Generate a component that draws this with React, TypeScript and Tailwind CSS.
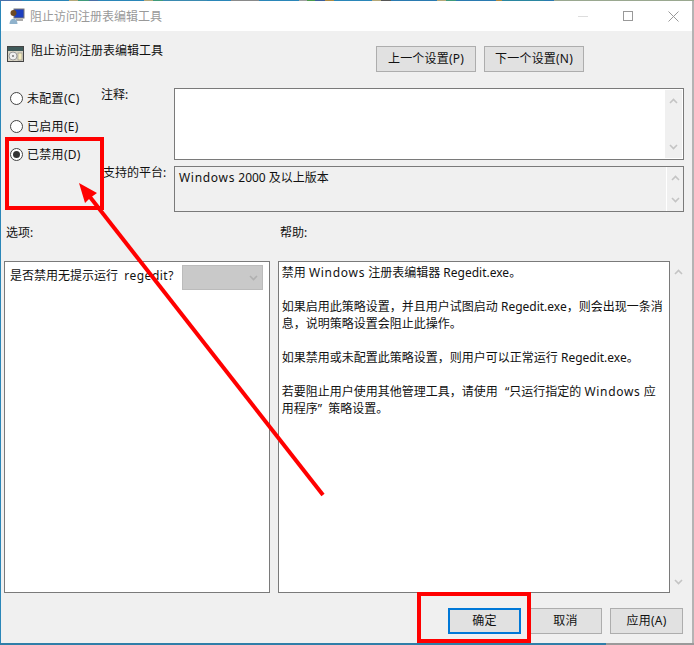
const fontCls = "font-['Noto_Sans','Noto_Sans_CJK_SC',sans-serif]";

// bits of the desktop visible above the window
const topStrip = [
  'w-[22px] bg-[#4a6fa8]',
  'w-[47px] bg-[#2a86b8]',
  'w-[9px] bg-[#b5a878]',
  'w-[11px] bg-[#3f9a7a]',
  'w-[9px] bg-[#4a6fa8]',
  'w-[46px] bg-[#2a86b8]',
  'w-[9px] bg-[#b5a878]',
  'w-[10px] bg-[#3f9a7a]',
  'w-[44px] bg-[#3a8ab0]',
  'w-[24px] bg-[#2a86b8]',
  'w-[28px] bg-[#8a8a8a]',
  'w-[40px] bg-[#2a86b8]',
  'w-[8px] bg-[#a0a0a0]',
  'w-[8px] bg-[#4a9a4a]',
  'w-[10px] bg-[#3a5f9a]',
  'w-[9px] bg-[#b08a40]',
  'w-[38px] bg-[#2a86b8]',
  'w-[9px] bg-[#b5a878]',
  'w-[10px] bg-[#555555]',
  'w-[46px] bg-[#2a7ab0]',
  'w-[9px] bg-[#b5a878]',
  'w-[10px] bg-[#3f9a7a]',
  'w-[40px] bg-[#2a7ab0]',
  'w-[6px] bg-[#b08a40]',
  'w-[42px] bg-[#2a86a0]',
  'w-[10px] bg-[#2a7ab0]',
  'flex-1 bg-[#9aa890]',
];

function Chevron({ up, color = '#c4c4c4' }: { up?: boolean; color?: string }) {
  return (
    <svg width="9" height="6" viewBox="0 0 9 6">
      <path d={up ? 'M1 5 L4.5 1.5 L8 5' : 'M1 1 L4.5 4.5 L8 1'} fill="none" stroke={color} strokeWidth="1.6" />
    </svg>
  );
}

function Scroll({ className }: { className: string }) {
  return (
    <div className={`flex flex-col items-center justify-between py-[8px] ${className}`}>
      <Chevron up />
      <Chevron />
    </div>
  );
}

function Radio({ label, checked }: { label: string; checked?: boolean }) {
  return (
    <div className="flex items-center gap-[4px] h-[14px]">
      <span className="w-[13px] h-[13px] rounded-full border border-[#444] bg-white flex items-center justify-center">
        {checked && <span className="w-[7px] h-[7px] rounded-full bg-[#333]" />}
      </span>
      <span className="mt-[1px] tracking-[0.3px]">{label}</span>
    </div>
  );
}

function Btn({ label, active, w }: { label: string; active?: boolean; w: string }) {
  return (
    <div
      className={`h-[26px] flex items-center justify-center bg-[#e1e1e1] tracking-[0.2px] ${w} ${
        active ? 'border-2 border-[#0078d7]' : 'border border-[#adadad]'
      }`}
    >
      {label}
    </div>
  );
}

function Windows() {
  return <span className="tracking-[0.7px]">Windows</span>;
}

function TitleIcon() {
  return (
    <svg width="16" height="16" viewBox="0 0 16 16">
      <rect x="5" y="1" width="10" height="9" fill="#1c3fbf" stroke="#777" />
      <rect x="7" y="11" width="7" height="2" fill="#aaa" />
      <circle cx="4.5" cy="5" r="3" fill="#6e4a24" />
      <path d="M0.5 16 C0.5 9 8.5 9 8.5 16 Z" fill="#8fb2cc" />
    </svg>
  );
}

function PolicyIcon() {
  return (
    <svg width="17" height="16" viewBox="0 0 17 16">
      <rect x="0.5" y="0.5" width="16" height="15" fill="#d8d4c4" stroke="#444" />
      <rect x="1" y="1" width="15" height="4" fill="#3f5a5a" />
      <circle cx="6" cy="10" r="4" fill="#eee" stroke="#999" />
      <circle cx="6" cy="10" r="1" fill="#777" />
      <rect x="11" y="7" width="4" height="7" fill="#f4ecc0" stroke="#777" strokeWidth="0.5" />
    </svg>
  );
}

export default function App() {
  return (
    <div className={`relative w-[694px] h-[645px] overflow-hidden flex flex-col bg-[#f0f0f0] text-[12px] leading-[16px] text-[#111] ${fontCls}`}>
      <div className="h-[1px] flex">
        {topStrip.map((seg, i) => (
          <span key={i} className={seg} />
        ))}
      </div>

      <div className="flex-1 flex flex-col border-l border-[#2a86b8] border-r-[2px] border-r-[#b4b4b4]">
        {/* title bar */}
        <div className="h-[30px] bg-white flex items-center pl-[8px] text-[#999]">
          <TitleIcon />
          <span className="ml-[5px] mt-[1px]">阻止访问注册表编辑工具</span>
          <div className="ml-auto flex items-center gap-[35px] pr-[13px]">
            <span className="w-[10px] h-[1px] bg-[#ddd]" />
            <span className="w-[10px] h-[10px] border border-[#999]" />
            <svg width="11" height="11" viewBox="0 0 11 11">
              <path d="M0.5 0.5 L10.5 10.5 M10.5 0.5 L0.5 10.5" stroke="#999" fill="none" />
            </svg>
          </div>
        </div>

        {/* policy heading + prev/next */}
        <div className="flex items-start pt-[15px] pl-[6px] pr-[108px] h-[57px]">
          <PolicyIcon />
          <span className="ml-[7px] mt-[-3px]">阻止访问注册表编辑工具</span>
          <div className="ml-auto flex gap-[8px]">
            <Btn label="上一个设置(P)" w="w-[100px]" />
            <Btn label="下一个设置(N)" w="w-[100px]" />
          </div>
        </div>

        {/* state + comment + platform */}
        <div className="flex pl-[9px] pr-[8px] h-[124px]">
          <div className="w-[91px] flex flex-col gap-[14px] pt-[3px]">
            <Radio label="未配置(C)" />
            <Radio label="已启用(E)" />
            <Radio label="已禁用(D)" checked />
          </div>
          <div className="w-[73px] flex flex-col">
            <span className="mt-[-1px]">注释:</span>
            <span className="mt-[62px] ml-[2px]">支持的平台:</span>
          </div>
          <div className="flex-1 flex flex-col gap-[6px]">
            <div className="h-[72px] border border-[#7a7a7a] bg-white flex justify-end p-[1px]">
              <Scroll className="w-[17px] bg-[#f0f0f0]" />
            </div>
            <div className="h-[46px] border border-[#7a7a7a] flex">
              <div className="flex-1 px-[4px] py-[3px]"><Windows /> 2000 及以上版本</div>
              <Scroll className="w-[17px] border-l border-white py-[6px]" />
            </div>
          </div>
        </div>

        {/* section labels */}
        <div className="flex h-[49px] pt-[13px] pl-[5px]">
          <span className="w-[274px]">选项:</span>
          <span>帮助:</span>
        </div>

        {/* options + help */}
        <div className="flex pl-[3px] pr-[5px] h-[332px]">
          <div className="w-[267px] border border-[#7a7a7a] bg-white flex items-start pt-[3px] pl-[5px]">
            <span className="mt-[3px] whitespace-nowrap w-[172px]">
              是否禁用无提示运行&nbsp; <span className="tracking-[0.5px]">regedit?</span>
            </span>
            <div className="w-[81px] h-[25px] bg-[#c9c9c9] border border-[#bbb] flex items-center justify-end pr-[4px]">
              <Chevron color="#b0b0b0" />
            </div>
          </div>
          <div className="w-[8px]" />
          <div className="w-[394px] border border-[#7a7a7a] bg-white pl-[3px] pr-[2px] pt-[2px] leading-[17px]">
            <p>禁用 <Windows /> 注册表编辑器 Regedit.exe。</p>
            <p className="mt-[17px]">如果启用此策略设置，并且用户试图启动 Regedit.exe，则会出现一条消息，说明策略设置会阻止此操作。</p>
            <p className="mt-[17px]">如果禁用或未配置此策略设置，则用户可以正常运行 Regedit.exe。</p>
            <p className="mt-[17px]">
              若要阻止用户使用其他管理工具，请使用 <span className="ml-[4px]">“</span>只运行指定的 <Windows /> 应
              <br />
              用程序<span className="mr-[3px]">”</span> 策略设置。
            </p>
          </div>
          <Scroll className="w-[17px] py-[7px]" />
        </div>

        {/* dialog buttons */}
        <div className="flex justify-end gap-[8px] pt-[15px] pr-[9px]">
          <Btn label="确定" w="w-[73px]" active />
          <Btn label="取消" w="w-[73px]" />
          <Btn label="应用(A)" w="w-[73px]" />
        </div>
      </div>

      <div className="h-[2px] flex">
        <span className="w-[606px] bg-[#2f7ea8]" />
        <span className="flex-1 bg-[#9a9a9a]" />
      </div>

      {/* red annotations drawn over the screenshot */}
      <div className="absolute left-[5px] top-[137px] w-[99px] h-[73px] border-[4px] border-[#ff0000]" />
      <div className="absolute left-[417px] top-[592px] w-[114px] h-[51px] border-[4px] border-[#ff0000]" />
      <svg className="absolute left-0 top-0" width="694" height="645" viewBox="0 0 694 645">
        <line x1="323" y1="495" x2="90" y2="197" stroke="#ff0000" strokeWidth="4" />
        <polygon points="79,183 97,193 90,198 85,203" fill="#ff0000" />
      </svg>
    </div>
  );
}
